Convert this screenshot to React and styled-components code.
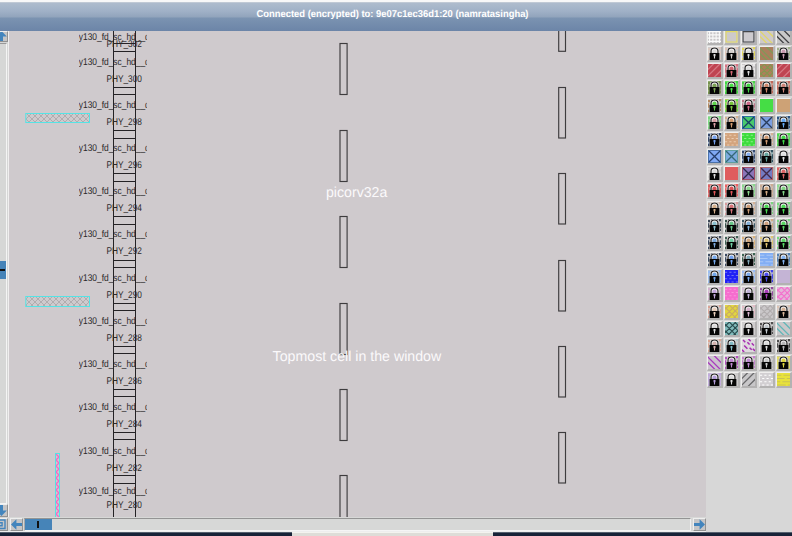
import React from 'react';
import styled, { createGlobalStyle } from 'styled-components';

const GlobalStyle = createGlobalStyle`
  html, body { margin: 0; padding: 0; overflow: hidden; }
  * { box-sizing: border-box; }
`;

const Window = styled.div`
  width: 792px;
  height: 536px;
  display: flex;
  flex-direction: column;
  overflow: hidden;
  background: #d7d7d7;
  font-family: 'Liberation Sans', Arial, sans-serif;
`;

const TitleBar = styled.header`
  flex: none;
  height: 31px;
  padding-bottom: 8px;
  display: flex;
  align-items: center;
  justify-content: center;
  border-top: 2px solid #f8f8f8;
  background: linear-gradient(#d2d6dc 0, #aebccd 1px, #a0b1c7 9px, #91a4bc 15px, #7b93b1 16px, #6c85a8 29px);
  color: #fff;
  font-size: 10px;
  font-weight: bold;
  white-space: pre;
`;

const TitleText = styled.svg`
  display: block;
  width: 274px;
  height: 16px;
  margin-right: 6px;
  overflow: visible;
  text-rendering: geometricPrecision;
`;

const Body = styled.main`
  flex: none;
  height: 501px;
  display: grid;
  grid-template-columns: 706px 86px;
`;

const Viewer = styled.section`
  display: grid;
  grid-template-rows: 486px 15px;
`;

const CanvasRow = styled.div`
  display: grid;
  grid-template-columns: 9px 697px;
`;

const VerticalBar = styled.div`
  display: flex;
  flex-direction: column;
  align-items: flex-start;
  background: #d6d7d6;
  border-right: 1px solid #f0efef;
`;

const VerticalTrack = styled.div`
  flex: 1;
  width: 7px;
  display: flex;
  flex-direction: column;
  justify-content: center;
  margin-top: 1px;
  border-top: 1px solid #999;
  border-right: 1px solid #f4f4f4;
  border-bottom: 1px solid #f4f4f4;
`;

const VerticalThumb = styled.div`
  height: 18px;
  margin-bottom: 8px;
  display: flex;
  align-items: center;
  background: #4684b8;
  &::after { content: ''; width: 5px; height: 2px; background: #111; }
`;

const ArrowButton = styled.button`
  flex: none;
  width: ${(p) => p.$w || 13}px;
  height: ${(p) => p.$h || 13}px;
  padding: 0;
  display: flex;
  align-items: center;
  justify-content: ${(p) => (p.$clipped ? 'flex-end' : 'center')};
  overflow: hidden;
  border: 1px solid #eee;
  border-left-width: ${(p) => (p.$clipped ? 0 : 1)}px;
  border-right-color: #929292;
  border-bottom-color: #929292;
  background: #c5c5c6;
  svg { flex: none; display: block; margin-right: ${(p) => p.$shift || 0}px; }
`;

const HorizontalBar = styled.div`
  display: flex;
  align-items: flex-start;
  gap: 2px;
  padding-top: 1px;
  border-bottom: 1px solid #eee;
  background: #d7d8d7;
`;

const HorizontalTrack = styled.div`
  flex: 1;
  height: 13px;
  margin-left: -1px;
  border-top: 1px solid #949494;
  border-left: 1px solid #aaa;
  border-bottom: 1px solid #f5f5f5;
  border-right: 1px solid #f0f0f0;
`;

const HorizontalThumb = styled.div`
  width: 27px;
  height: 11px;
  display: flex;
  align-items: center;
  justify-content: center;
  background: #4684b8;
  &::after { content: ''; width: 2px; height: 7px; margin-right: 2px; background: #111; }
`;

const Drawing = styled.svg`
  display: block;
  width: 697px;
  height: 486px;
  background: #cfcacd;
  font-family: 'Liberation Sans', Arial, sans-serif;
  text-rendering: geometricPrecision;
`;

const Palette = styled.aside`
  padding-left: 1px;
  overflow: hidden;
  background: #d7d7d7;
`;

const SwatchGrid = styled.div`
  width: 86px;
  margin-top: -2px;
  display: grid;
  grid-template-columns: repeat(5, 17.2px);
  grid-auto-rows: 17.16px;
`;

const SwatchCell = styled.div`
  width: 16px;
  height: 16px;
  border: 1px solid #efeeed;
  border-right: 2px solid #b3b2b2;
  border-bottom: 2px solid #b3b2b2;
  background: #cdcbcc;
  svg { display: block; }
`;

const Taskbar = styled.footer`
  flex: 1;
  display: grid;
  grid-template-columns: 292px 201px 299px;
  background: linear-gradient(#929ca5 0, #182338 1px);
  &::before { content: ''; }
`;

const TaskItem = styled.div`
  background: #deddd8;
  border-top: 1px solid #f4f3ef;
`;

const arrowTurn = { left: 0, up: 90, right: 180, down: 270 };

function Arrow({ dir }) {
  return (
    <svg width="11" height="11" viewBox="0 0 11 11">
      <path d="M0 5.5 5.4.2v3.8H11v3H5.4v3.8Z" fill="#4385bd" transform={`rotate(${arrowTurn[dir]} 5.5 5.5)`} />
    </svg>
  );
}

function Lock({ tint, accent }) {
  return (
    <>
      <path d="M0 1h2v2H0zM10 0h2v2h-2zM0 4h1.2v4H0zM10.8 4H12v4h-1.2zM0 10h1v2H0zM11 9h1v2h-1zM3 0h2v1H3zM8 0h1v1H8z" fill={accent} opacity=".8" />
      <path d="M2.9 6V4Q2.9 1.2 6 1.2T9.1 4v2" fill={tint} stroke="#f4f2f2" strokeWidth="2.4" />
      <path d="M4.6 6V4.2Q4.6 3 6 3t1.4 1.2V6" fill={tint} />
      <path d="M2.8 6V3.8Q2.8.9 6 .9t3.2 2.9V6" fill="none" stroke="#202020" strokeWidth="1.1" />
      <path d="M1.5 5.5h9V12h-9z" fill="#060606" />
      <path d="M5.1 6.5h1.8v2h-.4v2.2h-1V8.5h-.4z" fill={tint} />
    </>
  );
}

const textures = {
  diag: 'M-2 4 8 14M-1 0 12 13M5-1 13 7',
  slash: 'M-1 6 6-1M-1 12 12-1M5 13 13 5',
  cross: 'M0 4 4 0M0 10 10 0M3 12 12 3M8 12 12 8M0 8 4 12M0 2 10 12M4 0 12 8M9 0 12 3',
  x: 'M0 0 12 12M12 0 0 12',
  grid: 'M0 1.5h12M0 4.5h12M0 7.5h12M0 10.5h12M1.5 0v12M4.5 0v12M7.5 0v12M10.5 0v12',
  dots: 'M0 2h2M4 2h2M8 2h2M2 5h2M6 5h2M10 5h2M0 8h2M4 8h2M8 8h2M2 11h2M6 11h2M10 11h2',
  dash: 'M0 2h4M6 2h6M0 5h7M9 5h3M0 8h3M5 8h7M0 11h8M10 11h2',
  box: 'M1 1.5h10V11H1z',
  scatter: 'M1 1l2 2M6 0l2 2M9 4l2 2M2 6l3 3M7 8l2 2M10 9l2 2M0 10l2 2M5 3l2 2',
  solid: '',
};

const strokeWidths = { diag: 1.2, slash: 1.2, x: 1.2, scatter: 1.4, box: 1 };

function Swatch({ spec }) {
  const [kind, first, second, third] = spec.split(' ');
  const isLock = kind === 'lock';
  return (
    <SwatchCell>
      <svg width="13" height="13" viewBox="0 0 12 12">
        <path d="M0 0h12v12H0z" fill={isLock ? third || '#cfcccd' : first} />
        {isLock ? (
          <Lock tint={first} accent={second || first} />
        ) : (
          <path d={textures[kind]} fill="none" stroke={second} strokeWidth={strokeWidths[kind] || 1} />
        )}
        {kind === 'x' && <path d="M0 .4h12M0 11.6h12M.4 0v12M11.6 0v12" stroke={third || '#3f6496'} strokeWidth=".8" />}
      </svg>
    </SwatchCell>
  );
}

const layers = [
  ['grid #c8c6c8 #fafafa', 'box #cdcaca #e4dc61', 'box #cdcbcf #44464a', 'diag #cfcacb #e0d66c', 'diag #c8c8c8 #404044'],
  ['lock #ddd #dec8bd', 'lock #d8d3d0 #e2c2ae', 'lock #ddd #e5d83a', 'diag #ab7e5c #7f9a58', 'lock #ca9daf #91a877'],
  ['slash #bf4451 #d67883', 'lock #d16672 #d66777 #d7a6ae', 'lock #ddd #ededed', 'cross #b07e5c #829750', 'slash #bf4451 #d67883'],
  ['lock #7ca255 #728947 #93ad70', 'lock #48de48 #35d140 #6fe763', 'lock #40d641 #3acb3b #84dc7d', 'lock #cf876c #ba5a4b #cfa092', 'lock #cf8579 #c15d52 #d4a493'],
  ['lock #5ed54b #b07b46', 'lock #78c43e #4ee34b #b5cb60', 'lock #ce6888 #b95f78', 'solid #45dd45 #45dd45', 'solid #cda276 #cda276'],
  ['lock #d9a0a5 #72d878 #9ed9a0', 'lock #d29c71 #d5ad83', 'x #49c96d #173e67 #275cae', 'x #7c9fe0 #283c5d #8c8778', 'lock #64a9f2 #174075 #87a5bd'],
  ['lock #73a0ec #182b4d #a7b6cc', 'dots #d3a47e #eccbb0', 'dots #3ddc3e #8df08b', 'lock #cf9971 #d7ad89', 'lock #3fd846 #43d849 #78da78'],
  ['x #80a9f4 #263f6c', 'x #7dacdf #356776 #579b91', 'lock #83acf0 #1c3159 #9caec9', 'lock #65a69f #17394a #99b5b7', 'lock #e1e1e1 #eee'],
  ['lock #ddd #e1dfdc', 'solid #df5d5e #df5d5e', 'x #8b75b8 #292948 #a54354', 'x #747bc3 #432948 #bd6262', 'lock #dc6566 #e05455 #dc8b89'],
  ['lock #dd5558 #dd5558 #d98787', 'lock #dd5558 #ee4f51 #df9c9a', 'lock #8dd78d #80da85 #b1d1b0', 'lock #d3aa83 #cca88c #cebcaf', 'lock #82d684 #86df8a #acd3a9'],
  ['lock #d6b18d #ceb19c', 'lock #d87379 #db8f92', 'lock #cc9d78 #d3ab8a', 'lock #49d951 #67d76c', 'lock #4bdc55 #65dd6e #b9d0b8'],
  ['lock #8cc1ce #162638', 'lock #6ac88a #13332a', 'lock #83b0d8 #163d4e', 'lock #d3a380 #d2a36e', 'lock #58d761 #66d870'],
  ['lock #7da9dc #172b48', 'lock #71d0a4 #194637', 'lock #d0a77d #dfad65', 'lock #dfc26f #e4c55d', 'lock #59d665 #57db68'],
  ['lock #75a9ec #182d4a', 'lock #73a2ee #172a48', 'lock #83a9b8 #174833', 'dash #82aef4 #abc8f5', 'lock #84b3f1 #3e6faa #abc0d7'],
  ['lock #71a6e9 #94bafa #afc4d9', 'dots #2020f5 #7575ee', 'lock #78a9ed #8eb6ff #c1cbd5', 'lock #4a4bee #2525ef #aaa9db', 'solid #c4b4d5 #c4b4d5'],
  ['lock #c2a8dd #d5a9cf', 'dots #f66dce #f994da', 'lock #c2b4d9 #d6bbdc', 'lock #a93dba #832894', 'cross #e5b5d9 #f471cd'],
  ['lock #ebd0bc #db9887', 'cross #e1d63f #caad62', 'lock #d9b4ce #e8b6c4', 'cross #cac7c9 #b1adae', 'lock #d7b497 #ddc0ad'],
  ['lock #ddd #c6c6c6', 'cross #81bcbc #294c4e', 'lock #ddd #d0d0d0', 'lock #c4cbd0 #303030', 'diag #cac8ca #63b7b8'],
  ['lock #d5b2ae #df9e86', 'lock #84bdc7 #a6c6ca', 'scatter #dedade #a72bb1', 'lock #ddd #c1c0c1', 'lock #b7b7b8 #2b2b2b'],
  ['diag #ccc4ce #a83cbd', 'lock #be87d0 #ab31bc', 'lock #be87d0 #c06bce', 'lock #ccc #b8b8b8', 'lock #dfd63f #e7de51 #ceca8c'],
  ['lock #b39dda #c0a6de #c4b8d7', 'lock #ddd #c8c8c8', 'slash #c8c7c9 #69696b', 'dots #d2cfd2 #fff', 'dash #e8e23a #c9c354'],
];

// Baselines of the cell type and instance name of every placed cell.
const cells = [
  [39.7, 47.3, 302], [64.7, 81.6, 300], [108.4, 125.4, 298], [151.4, 168.4, 296],
  [194.4, 211.4, 294], [237.4, 254.4, 292], [281.3, 298.3, 290], [324.3, 341.3, 288],
  [367.1, 384.1, 286], [410.1, 427.1, 284], [454, 471, 282], [493.6, 507.6, 280],
];

const rails = [43, 51, 87, 94, 130, 138, 173, 181, 216, 224, 260, 267, 303, 310, 346, 353, 389, 396, 432, 439, 475, 483];
const innerTaps = [43, 130, 216, 303, 389, 475];
const outerTaps = [0, 87, 173, 260, 346, 432];

function ChipLayout() {
  return (
    <Drawing viewBox="9 31 697 486">
      <defs>
        <pattern id="mesh" x="26" y="113" width="6" height="6" patternUnits="userSpaceOnUse">
          <path d="M0 0 6 6M6 0 0 6" stroke="#aaa4a6" strokeWidth=".8" />
        </pattern>
        <pattern id="pinkMesh" x="56" y="454" width="4" height="6" patternUnits="userSpaceOnUse">
          <path d="M0 0 3 3 0 6" fill="none" stroke="#f765c4" strokeWidth="1.3" />
        </pattern>
        <clipPath id="typeClip"><path d="M79 31h67.8v486H79z" /></clipPath>
      </defs>
      <g fill="url(#mesh)">
        <rect x="26" y="114" width="63" height="8" />
        <rect x="26" y="297" width="63" height="9" />
        <rect x="56" y="454" width="3" height="64" fill="url(#pinkMesh)" />
      </g>
      <g fill="none" stroke="#55e3e5" strokeWidth="1">
        <rect x="25.8" y="113.5" width="63.7" height="9" />
        <rect x="25.8" y="296.5" width="63.7" height="10" />
        <rect x="55.5" y="453.5" width="4" height="66" />
      </g>
      <g fill="none" stroke="#242225">
        <path d="M113.5 31v486M135.5 31v486" />
        {rails.map((y) => <path key={y} d={`M113 ${y + 0.5}h23`} />)}
      </g>
      <g fill="#2a282a" fontSize="9.8">
        {cells.map(([typeY, nameY, n]) => (
          <React.Fragment key={n}>
            <g clipPath="url(#typeClip)">
              <text x="78.8" y={typeY} textLength="71" lengthAdjust="spacingAndGlyphs">y130_fd_sc_hd__d</text>
            </g>
            <text x="106.4" y={nameY} textLength="35.5" lengthAdjust="spacingAndGlyphs">{`PHY_${n}`}</text>
          </React.Fragment>
        ))}
      </g>
      <g fill="none" stroke="#3e3c3e" strokeWidth="1.15">
        {innerTaps.map((y) => <rect key={y} x="340" y={y + 0.5} width="7.1" height="51" />)}
        {outerTaps.map((y) => <rect key={y} x="558.7" y={y + 0.5} width="6.8" height={y ? 50.5 : 50.8} />)}
      </g>
      <g fill="#fbf9fb" fontSize="14.4">
        <text x="326" y="197" textLength="61.3" lengthAdjust="spacingAndGlyphs">picorv32a</text>
        <text x="272.6" y="360.5" textLength="168.6" lengthAdjust="spacingAndGlyphs">Topmost cell in the window</text>
      </g>
    </Drawing>
  );
}

export default function App() {
  return (
    <Window>
      <GlobalStyle />
      <TitleBar>
        <TitleText viewBox="0 0 274 16">
          <text x="0.5" y="11.5" fill="#fff" textLength="272" lengthAdjust="spacingAndGlyphs">Connected (encrypted) to: 9e07c1ec36d1:20 (namratasingha)</text>
        </TitleText>
      </TitleBar>
      <Body>
        <Viewer>
          <CanvasRow>
            <VerticalBar>
              <ArrowButton $w={8} $h={11} $clipped><Arrow dir="up" /></ArrowButton>
              <VerticalTrack><VerticalThumb /></VerticalTrack>
              <ArrowButton $w={8} $h={13} $clipped><Arrow dir="down" /></ArrowButton>
            </VerticalBar>
            <ChipLayout />
          </CanvasRow>
          <HorizontalBar>
            <ArrowButton $w={8} $clipped $shift={1}>
              <svg width="11" height="11" viewBox="0 0 11 11" fill="none" stroke="#4385bd" strokeWidth="1.4">
                <path d="M1 1h9v8.5H1zM3.8 3.8h3.3v3H3.8z" />
              </svg>
            </ArrowButton>
            <ArrowButton><Arrow dir="left" /></ArrowButton>
            <HorizontalTrack><HorizontalThumb /></HorizontalTrack>
            <ArrowButton><Arrow dir="right" /></ArrowButton>
          </HorizontalBar>
        </Viewer>
        <Palette>
          <SwatchGrid>
            {layers.flat().map((spec, i) => <Swatch key={i} spec={spec} />)}
          </SwatchGrid>
        </Palette>
      </Body>
      <Taskbar><TaskItem /></Taskbar>
    </Window>
  );
}
